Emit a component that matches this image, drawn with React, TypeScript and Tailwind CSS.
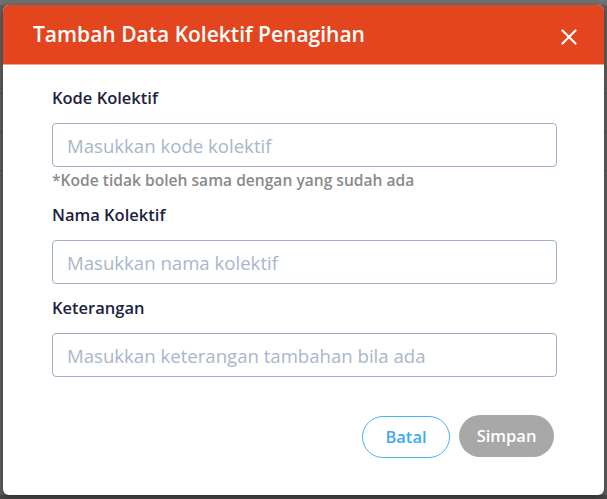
import { X } from 'lucide-react';

const fields = [
    { label: 'Kode Kolektif', placeholder: 'Masukkan kode kolektif', hint: '*Kode tidak boleh sama dengan yang sudah ada' },
    { label: 'Nama Kolektif', placeholder: 'Masukkan nama kolektif' },
    { label: 'Keterangan', placeholder: 'Masukkan keterangan tambahan bila ada' },
];

export default function App() {
    return (
        <div
            className="relative w-[607px] h-[499px] overflow-hidden bg-[#5e5e5e]"
            style={{ fontFamily: '"Open Sans", "Noto Sans", sans-serif' }}
        >
            {/* page behind the overlay */}
            <div className="absolute inset-x-0 top-0 h-[5px] bg-[#707070]" />
            <div className="absolute inset-x-0 top-[93px] h-px bg-[#4f4f4f]" />
            <div className="absolute inset-x-0 top-[131px] h-px bg-[#4f4f4f]" />
            <div className="absolute inset-x-0 top-[170px] h-px bg-[#4f4f4f]" />
            <div className="absolute inset-x-0 bottom-0 h-[4px] bg-[#474747]" />

            <div className="relative mx-[3px] mt-[5px] h-[490px] rounded-[6px] bg-white overflow-hidden shadow-[0_2px_6px_rgba(0,0,0,0.35)]">
                <div className="flex items-center justify-between h-[60px] pl-[30px] pr-[22px] bg-[#e3461e] border-b border-[#f3a58a]">
                    <h1 className="text-[21px] font-semibold text-white">
                        Tambah Data Kolektif Penagihan
                    </h1>
                    <X className="w-[26px] h-[26px] mt-1 text-white" strokeWidth={2} />
                </div>

                <div className="pl-[49px] pr-[47px] pt-[21px]">
                    {fields.map((f, idx) => (
                        <div key={idx} className={idx === 0 ? '' : 'mt-[12px]'}>
                            <label className="block text-[16.5px] font-semibold text-[#1c2340] leading-[24px]">
                                {f.label}
                            </label>
                            <input
                                className="mt-[13px] block w-full h-[44px] rounded-[4px] border border-[#9eadc8] px-[14px] text-[18.6px] placeholder:text-[#a9b6cb] outline-none"
                                placeholder={f.placeholder}
                            />
                            {f.hint && (
                                <p className="mt-[2px] text-[15.6px] font-semibold text-[#8a8a8a] leading-[22px]">
                                    {f.hint}
                                </p>
                            )}
                        </div>
                    ))}

                    <div className="flex justify-end items-start gap-[9px] mt-[38px] pr-[3px]">
                        <button className="w-[88px] h-[42px] mt-px rounded-full border border-[#47b4f0] text-[#3eaaf0] text-[16.5px] font-semibold bg-white">
                            Batal
                        </button>
                        <button className="w-[95px] h-[42px] rounded-full bg-[#a8a8a8] text-white text-[16.5px] font-semibold">
                            Simpan
                        </button>
                    </div>
                </div>
            </div>
        </div>
    );
}
